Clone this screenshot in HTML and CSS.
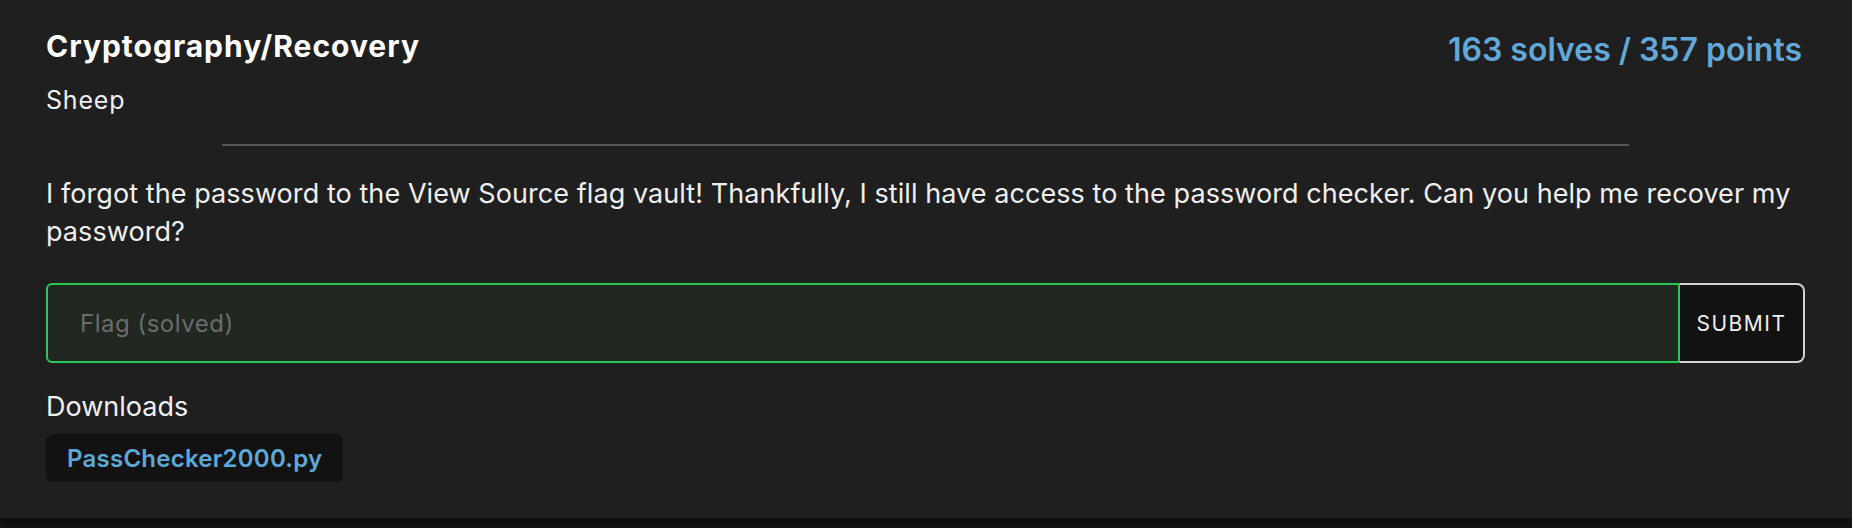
FILE: index.html
```html
<!DOCTYPE html>
<html lang="en">
<head>
<meta charset="utf-8">
<title>Cryptography/Recovery</title>
<link rel="stylesheet" href="styles.css">
</head>
<body>
<div class="card">
  <div class="header">
    <h2 class="title">Cryptography/Recovery</h2>
    <div class="points">163 solves / 357 points</div>
  </div>
  <div class="author">Sheep</div>
  <hr class="divider">
  <p class="desc">I forgot the password to the View Source flag vault! Thankfully, I still have access to the password checker. Can you help me recover my password?</p>
  <form class="flag-form">
    <input class="flag-input" type="text" placeholder="Flag (solved)">
    <button class="submit" type="button">SUBMIT</button>
  </form>
  <div class="downloads-label">Downloads</div>
  <div class="downloads">
    <a class="file" href="#">PassChecker2000.py</a>
  </div>
</div>
</body>
</html>
```
FILE: styles.css
```css
html, body {
  margin: 0;
  padding: 0;
  background: #131313;
  height: 100%;
}
body {
  font-family: Inter, "Noto Sans", sans-serif;
  color: #eeeeee;
}
.card {
  background: #1f1f1f;
  padding: 28px 47px 36px 46px;
  box-shadow: 0 2px 8px rgba(0,0,0,0.6);
}
.header {
  display: flex;
  justify-content: space-between;
  align-items: flex-start;
  height: 42px;
}
.title {
  margin: 0;
  font-size: 30px;
  font-weight: 700;
  line-height: 36px;
  letter-spacing: 1px;
  color: #ffffff;
}
.points {
  font-size: 32px;
  font-weight: 600;
  line-height: 40px;
  margin-top: 2px;
  margin-right: 3px;
  color: #62a9d9;
}
.author {
  margin-top: 12px;
  font-size: 25px;
  line-height: 36px;
  letter-spacing: 0.8px;
  color: #f0f0f0;
}
.divider {
  width: 80%;
  margin: 26px auto 0;
  border: none;
  height: 2px;
  background: #575757;
}
.desc {
  margin: 29px 0 0;
  font-size: 27px;
  line-height: 38px;
  letter-spacing: 0.07px;
  color: #efefef;
}
.flag-form {
  display: flex;
  margin-top: 32px;
  height: 80px;
}
.flag-input {
  flex: 1;
  min-width: 0;
  box-sizing: border-box;
  height: 80px;
  margin: 0;
  padding: 0 32px;
  border: 2px solid #2ac955;
  border-radius: 6px 0 0 6px;
  background: #212721;
  color: #eeeeee;
  font-family: Inter, "Noto Sans", sans-serif;
  font-size: 24px;
  outline: none;
}
.flag-input::placeholder {
  color: #6c6c6c;
  letter-spacing: 0.5px;
}
.submit {
  box-sizing: border-box;
  width: 125px;
  height: 80px;
  margin: 0;
  padding: 0;
  border: 2px solid #d2d2d2;
  border-left: none;
  border-radius: 0 8px 8px 0;
  background: #121212;
  color: #eeeeee;
  font-family: Inter, "Noto Sans", sans-serif;
  font-size: 21px;
  font-weight: 400;
  letter-spacing: 1.5px;
}
.downloads-label {
  margin-top: 25px;
  font-size: 27px;
  line-height: 38px;
  color: #f0f0f0;
}
.downloads {
  display: flex;
  margin-top: 8px;
}
.file {
  display: inline-flex;
  align-items: center;
  height: 48px;
  padding: 0 21px;
  border-radius: 7px;
  background: #121212;
  color: #5ea8d8;
  font-size: 24px;
  font-weight: 600;
  letter-spacing: 0.25px;
  text-decoration: none;
}
```
